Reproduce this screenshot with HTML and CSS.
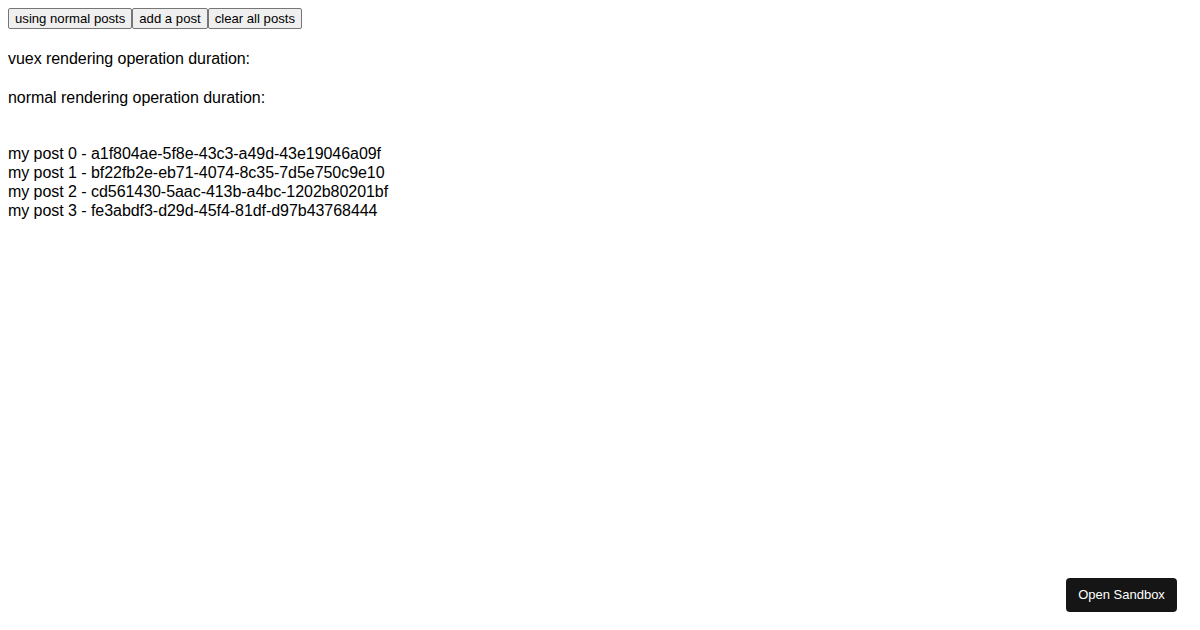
FILE: index.html
```html
<!DOCTYPE html>
<html>
<head>
<meta charset="utf-8">
<link rel="stylesheet" href="styles.css">
</head>
<body>
<div class="toolbar"><button class="btn">using normal posts</button><button class="btn">add a post</button><button class="btn">clear all posts</button></div>
<p class="stat">vuex rendering operation duration: </p>
<p class="stat">normal rendering operation duration: </p>
<div class="posts">
  <div class="post">my post 0 - a1f804ae-5f8e-43c3-a49d-43e19046a09f</div>
  <div class="post">my post 1 - bf22fb2e-eb71-4074-8c35-7d5e750c9e10</div>
  <div class="post">my post 2 - cd561430-5aac-413b-a4bc-1202b80201bf</div>
  <div class="post">my post 3 - fe3abdf3-d29d-45f4-81df-d97b43768444</div>
</div>
<a class="sandbox">Open Sandbox</a>
</body>
</html>
```
FILE: styles.css
```css
html, body {
  background: #ffffff;
}
body {
  margin: 8px;
  font-family: "Liberation Sans", Arial, sans-serif;
  font-size: 16px;
  color: #000000;
}
.toolbar {
  display: flex;
  height: 21px;
}
.btn {
  font-family: "Liberation Sans", Arial, sans-serif;
  font-size: 13.15px;
  line-height: normal;
  color: #000000;
  background: #efefef;
  border: 1px solid #767676;
  border-radius: 2px;
  padding: 1px 6px;
  margin: 0;
  height: 21px;
}
.stat {
  margin: 20.5px 0;
  line-height: 18.4px;
  letter-spacing: -0.05px;
}
.stat:first-of-type {
  margin-top: 21px;
}
.posts {
  margin-top: 36.8px;
  line-height: 19px;
  letter-spacing: -0.05px;
}
.sandbox {
  position: fixed;
  right: 23px;
  bottom: 18px;
  width: 111px;
  height: 34px;
  box-sizing: border-box;
  display: flex;
  align-items: center;
  justify-content: center;
  padding-bottom: 1px;
  background: #151515;
  color: #ffffff;
  border-radius: 4px;
  font-family: "Liberation Sans", Arial, sans-serif;
  font-size: 13px;
}
```
